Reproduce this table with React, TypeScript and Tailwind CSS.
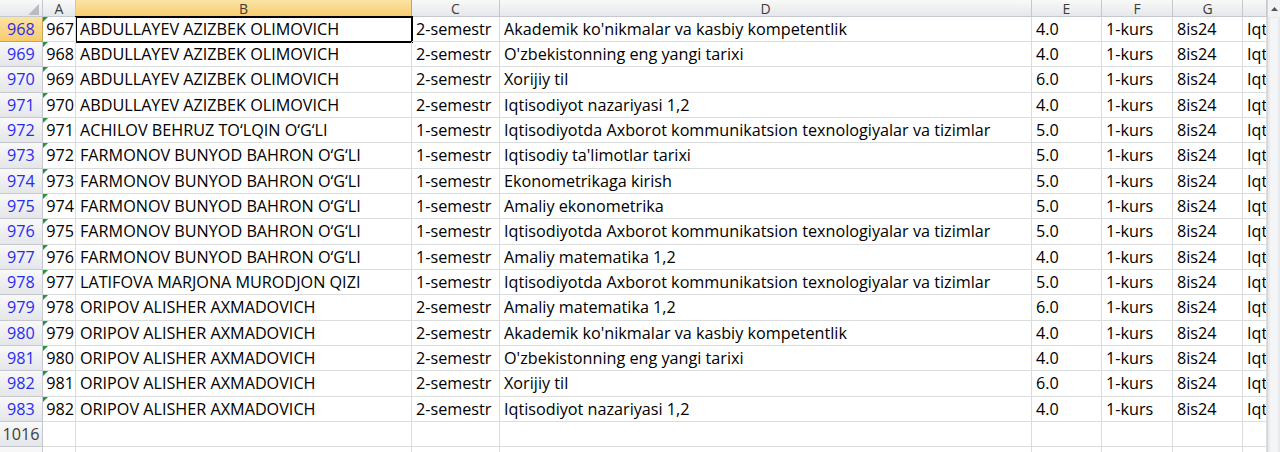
const ORIPOV = "ORIPOV ALISHER AXMADOVICH";
const ABDU = "ABDULLAYEV AZIZBEK OLIMOVICH";
const FARM = "FARMONOV BUNYOD BAHRON O‘G‘LI";
const AKT = "Iqtisodiyotda Axborot kommunikatsion texnologiyalar va tizimlar";

const rows: [number, string, string, string, string][] = [
  [968, ABDU, "2-semestr", "Akademik ko'nikmalar va kasbiy kompetentlik", "4.0"],
  [969, ABDU, "2-semestr", "O'zbekistonning eng yangi tarixi", "4.0"],
  [970, ABDU, "2-semestr", "Xorijiy til", "6.0"],
  [971, ABDU, "2-semestr", "Iqtisodiyot nazariyasi 1,2", "4.0"],
  [972, "ACHILOV BEHRUZ TO‘LQIN O‘G‘LI", "1-semestr", AKT, "5.0"],
  [973, FARM, "1-semestr", "Iqtisodiy ta'limotlar tarixi", "5.0"],
  [974, FARM, "1-semestr", "Ekonometrikaga kirish", "5.0"],
  [975, FARM, "1-semestr", "Amaliy ekonometrika", "5.0"],
  [976, FARM, "1-semestr", AKT, "5.0"],
  [977, FARM, "1-semestr", "Amaliy matematika 1,2", "4.0"],
  [978, "LATIFOVA MARJONA MURODJON QIZI", "1-semestr", AKT, "5.0"],
  [979, ORIPOV, "2-semestr", "Amaliy matematika 1,2", "6.0"],
  [980, ORIPOV, "2-semestr", "Akademik ko'nikmalar va kasbiy kompetentlik", "4.0"],
  [981, ORIPOV, "2-semestr", "O'zbekistonning eng yangi tarixi", "4.0"],
  [982, ORIPOV, "2-semestr", "Xorijiy til", "6.0"],
  [983, ORIPOV, "2-semestr", "Iqtisodiyot nazariyasi 1,2", "4.0"],
];

// row heights alternate so the 16 rows span ~405px like the capture
const heights = ["h-[25px]", "h-[25px]", "h-[26px]"];

const cell = "flex shrink-0 items-center overflow-hidden whitespace-nowrap border-r border-b border-[#dadcdd]";
const headBase = "flex shrink-0 items-center justify-center border-r border-b";
const headGray = "border-[#c5c9cf] bg-gradient-to-b from-[#f9f9f9] to-[#e4e6e9]";
const headGold = "border-[#c5a35a] bg-gradient-to-b from-[#fbe3a4] to-[#f6cb6c]";
const head = `${headBase} ${headGray} text-[#3d3d3d]`;

// column header strip: bottom line drawn as inset shadow so letters get the full 17px
const colHead =
  "flex shrink-0 items-center justify-center border-r border-[#c5c9cf] bg-gradient-to-b from-[#f9f9f9] to-[#e4e6e9] shadow-[inset_0_-1px_0_#c5c9cf]";
const colHeadSel =
  "flex shrink-0 items-center justify-center border-r border-[#c5a35a] bg-gradient-to-b from-[#fbe3a4] to-[#f6cb6c] shadow-[inset_0_-1px_0_#c5a35a]";

function GreenTick() {
  return (
    <span className="absolute top-0 left-0 h-0 w-0 border-t-[5px] border-r-[5px] border-t-[#1d9a3a] border-r-transparent" />
  );
}

export default function App() {
  return (
    <div
      className="flex h-[452px] w-[1280px] overflow-hidden bg-white text-[16.2px] text-black"
      style={{ fontFamily: '"Open Sans", "Noto Sans", sans-serif' }}
    >
      <div className="flex w-[1267px] shrink-0 flex-col">
        {/* column headers */}
        <div className="flex h-[17px] shrink-0 text-[14px] leading-[17px] text-[#3d3d3d]">
          <div className={`${colHead} relative w-[43px]`}>
            <span className="absolute right-[3px] bottom-[2px] h-0 w-0 border-b-[11px] border-l-[11px] border-b-[#b9bcc1] border-l-transparent" />
          </div>
          <div className={`${colHead} w-[33px]`}>A</div>
          <div className={`${colHeadSel} w-[336px]`}>B</div>
          <div className={`${colHead} w-[88px]`}>C</div>
          <div className={`${colHead} w-[532px]`}>D</div>
          <div className={`${colHead} w-[70px]`}>E</div>
          <div className={`${colHead} w-[71px]`}>F</div>
          <div className={`${colHead} w-[70px]`}>G</div>
          <div className={`${colHead} flex-1`} />
        </div>

        {rows.map(([n, name, sem, subject, credit], i) => (
          <div key={n} className={`flex shrink-0 ${heights[i % 3]}`}>
            <div
              className={`${headBase} ${i === 0 ? headGold : headGray} w-[43px] text-[#2b2bf0]`}
            >
              {n}
            </div>
            <div className={`${cell} relative w-[33px] justify-end pr-[1px]`}>
              <GreenTick />
              {n - 1}
            </div>
            <div
              className={`${cell} w-[336px] pl-[4px] ${
                i === 0 ? "outline-2 -outline-offset-1 outline-black" : ""
              }`}
            >
              {name}
            </div>
            <div className={`${cell} w-[88px] pl-[4px]`}>{sem}</div>
            <div className={`${cell} w-[532px] pl-[4px]`}>{subject}</div>
            <div className={`${cell} w-[70px] pl-[4px]`}>{credit}</div>
            <div className={`${cell} w-[71px] pl-[4px]`}>1-kurs</div>
            <div className={`${cell} w-[70px] pl-[4px]`}>8is24</div>
            <div className={`${cell} flex-1 pl-[4px]`}>Iqt</div>
          </div>
        ))}

        {[1016, 0].map((n) => (
          <div key={n} className="flex h-[25px] shrink-0">
            <div className={`${head} w-[43px]`}>{n || ""}</div>
            <div className={`${cell} w-[33px]`} />
            <div className={`${cell} w-[336px]`} />
            <div className={`${cell} w-[88px]`} />
            <div className={`${cell} w-[532px]`} />
            <div className={`${cell} w-[70px]`} />
            <div className={`${cell} w-[71px]`} />
            <div className={`${cell} w-[70px]`} />
            <div className={`${cell} flex-1`} />
          </div>
        ))}
      </div>

      {/* vertical scrollbar */}
      <div className="flex flex-1 flex-col border-l border-[#d3d5d9] bg-[#e9eaed]">
        <div className="flex h-[17px] items-center justify-center bg-[#f2f3f5]">
          <svg width="7" height="4" viewBox="0 0 7 4">
            <path d="M0 4 L3.5 0 L7 4 Z" fill="#555" />
          </svg>
        </div>
        <div className="mx-[2px] mt-[1px] flex-1 bg-[#f4f5f7]" />
      </div>
    </div>
  );
}
